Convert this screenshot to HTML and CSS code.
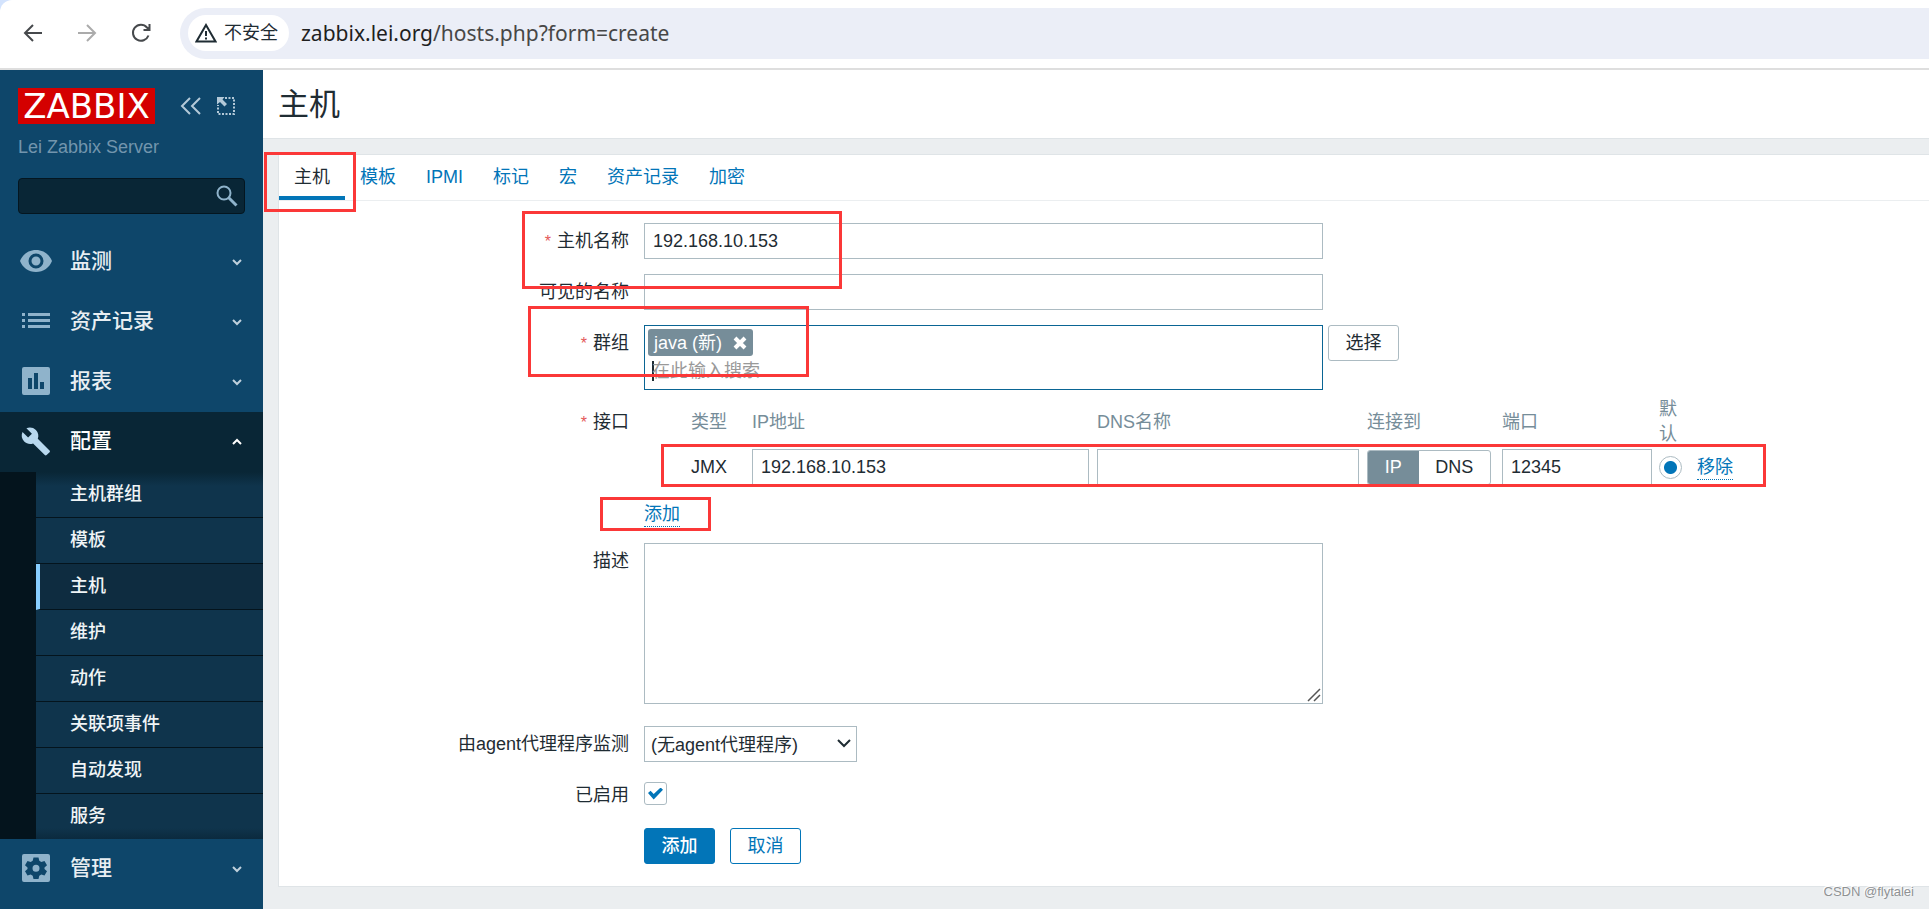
FILE: index.html
```html
<!DOCTYPE html>
<html lang="zh-CN">
<head>
<meta charset="utf-8">
<title>主机</title>
<link rel="stylesheet" href="styles.css">
</head>
<body>
<div class="chrome">
  <header class="toolbar">
    <button class="nav-btn" type="button" aria-label="后退"><svg width="24" height="24" viewBox="0 0 24 24"><path d="M21 12H4M12 4l-8 8 8 8"/></svg></button>
    <button class="nav-btn nav-off" type="button" aria-label="前进"><svg width="24" height="24" viewBox="0 0 24 24"><path d="M3 12h17M12 4l8 8-8 8"/></svg></button>
    <button class="nav-btn" type="button" aria-label="刷新"><svg width="24" height="24" viewBox="0 0 24 24"><path d="M19.500 14.500A8 8 0 1 1 18 6.500l2 2M20.500 3v6h-6"/></svg></button>
    <div class="omnibox">
      <span class="secure"><svg width="22" height="20" viewBox="0 0 22 20"><path d="M11 2L20.500 18.500H1.500z"/><path d="M11 8v5M11 14.500v2"/></svg>不安全</span>
      <span class="url">zabbix.lei.org<span class="path">/hosts.php?form=create</span></span>
    </div>
  </header>
</div>
<div class="app">
  <aside class="sidebar">
    <div class="brand">
      <a class="logo" href="#">ZABBIX</a>
      <button class="ghost" type="button" aria-label="收起"><svg width="22" height="20" viewBox="0 0 22 20"><path d="M11 2L3 10l8 8M21 2l-8 8 8 8"/></svg></button>
      <button class="ghost" type="button" aria-label="隐藏"><svg width="20" height="20" viewBox="0 0 20 20"><path d="M9 2h9v16H2V9" stroke-dasharray="2 1.500"/><path d="M1 1h7.500L6.500 3.500l4.500 4.500-2.500 2.500L4 6 1 8.500z" class="solid"/></svg></button>
    </div>
    <div class="server">Lei Zabbix Server</div>
    <form class="search">
      <input type="text" aria-label="搜索">
      <button type="button" aria-label="搜索"><svg width="22" height="22" viewBox="0 0 22 22"><circle cx="8" cy="8" r="6.500"/><path d="M12.500 12.500l8 8" stroke-width="3"/></svg></button>
    </form>
    <nav class="menu">
      <a class="item" href="#"><svg class="ico" width="32" height="32" viewBox="0 0 32 32"><path fill-rule="evenodd" d="M16 5C8.500 5 2.500 9.500 0 16c2.500 6.500 8.500 11 16 11s13.500-4.500 16-11C29.500 9.500 23.500 5 16 5zm0 18.500a7.500 7.500 0 1 1 0-15 7.500 7.500 0 0 1 0 15zm0-3a4.500 4.500 0 1 0 0-9 4.500 4.500 0 0 0 0 9z"/></svg><span>监测</span><svg class="chev" width="10" height="8" viewBox="0 0 10 8"><path d="M1 2l4 4 4-4"/></svg></a>
      <a class="item" href="#"><svg class="ico" width="32" height="32" viewBox="0 0 32 32"><path d="M2 8h3v3H2zM8 8h22v3H8zM2 14h3v3H2zM8 14h22v3H8zM2 20h3v3H2zM8 20h22v3H8z"/></svg><span>资产记录</span><svg class="chev" width="10" height="8" viewBox="0 0 10 8"><path d="M1 2l4 4 4-4"/></svg></a>
      <a class="item" href="#"><svg class="ico" width="32" height="32" viewBox="0 0 32 32"><path fill-rule="evenodd" d="M4 2h24a2 2 0 0 1 2 2v24a2 2 0 0 1-2 2H4a2 2 0 0 1-2-2V4a2 2 0 0 1 2-2zm4 11v11h4V13zm6-5v16h4V8zm6 9v7h4v-7z"/></svg><span>报表</span><svg class="chev" width="10" height="8" viewBox="0 0 10 8"><path d="M1 2l4 4 4-4"/></svg></a>
      <a class="item item-open" href="#"><svg class="ico" width="32" height="32" viewBox="0 0 32 32"><path d="M29.500 25.500L17.800 13.800c1.200-3 .5-6.500-1.900-8.900C13.300 2.300 9.500 1.800 6.400 3.200l5.500 5.500-3.800 3.800L2.500 7C1 10.100 1.600 13.900 4.200 16.500c2.400 2.400 5.900 3 8.900 1.900l11.700 11.700c.5.500 1.300.5 1.800 0l3-2.900c.5-.5.500-1.300-.1-1.700z"/></svg><span>配置</span><svg class="chev" width="10" height="8" viewBox="0 0 10 8"><path d="M1 6l4-4 4 4"/></svg></a>
      <div class="submenu">
        <a href="#">主机群组</a>
        <a href="#">模板</a>
        <a href="#" class="current">主机</a>
        <a href="#">维护</a>
        <a href="#">动作</a>
        <a href="#">关联项事件</a>
        <a href="#">自动发现</a>
        <a href="#">服务</a>
      </div>
      <a class="item" href="#"><svg class="ico" width="32" height="32" viewBox="0 0 32 32"><path fill-rule="evenodd" d="M4 2h24a2 2 0 0 1 2 2v24a2 2 0 0 1-2 2H4a2 2 0 0 1-2-2V4a2 2 0 0 1 2-2zm9.500 3.500l-.8 3.300-2 1.200-3.200-1L5 13.300l2.500 2.200v1.600L5 19.300l2.500 4.300 3.200-1 2 1.200.8 3.300h5l.8-3.300 2-1.200 3.200 1 2.500-4.300-2.500-2.200v-1.600l2.500-2.200L24.500 9l-3.200 1-2-1.200-.8-3.300zm2.500 7.300a3.500 3.500 0 1 1 0 7 3.500 3.500 0 0 1 0-7z"/></svg><span>管理</span><svg class="chev" width="10" height="8" viewBox="0 0 10 8"><path d="M1 2l4 4 4-4"/></svg></a>
    </nav>
  </aside>
  <main class="main">
    <header class="title"><h1>主机</h1></header>
    <section class="panel">
      <nav class="tabs">
        <a href="#" class="active">主机</a>
        <a href="#">模板</a>
        <a href="#">IPMI</a>
        <a href="#">标记</a>
        <a href="#">宏</a>
        <a href="#">资产记录</a>
        <a href="#">加密</a>
      </nav>
      <form class="form">
        <div class="row">
          <label class="label required" for="host">主机名称</label>
          <input class="box wide" id="host" type="text" value="192.168.10.153">
        </div>
        <div class="row">
          <label class="label" for="visible">可见的名称</label>
          <input class="box wide" id="visible" type="text">
        </div>
        <div class="row row-tight">
          <label class="label required" for="groups">群组</label>
          <div class="multi wide">
            <span class="tag">java (新)<button type="button" aria-label="移除 java"><svg width="14" height="14" viewBox="0 0 14 14"><path d="M2 2l10 10M12 2L2 12"/></svg></button></span>
            <span class="entry"><i class="caret"></i><input id="groups" type="text" placeholder="在此输入搜索"></span>
          </div>
          <button class="btn btn-pick" type="button">选择</button>
        </div>
        <div class="row">
          <span class="label label-interfaces required">接口</span>
          <div>
            <table class="interfaces">
              <colgroup><col class="c-space"><col class="c-type"><col class="c-ip"><col class="c-dns"><col class="c-conn"><col class="c-port"><col class="c-def"><col class="c-act"></colgroup>
              <thead><tr><th></th><th>类型</th><th>IP地址</th><th>DNS名称</th><th>连接到</th><th>端口</th><th><span class="narrow">默认</span></th><th></th></tr></thead>
              <tbody><tr>
                <td></td>
                <td>JMX</td>
                <td><input class="box in-ip" type="text" value="192.168.10.153" aria-label="IP地址"></td>
                <td><input class="box in-dns" type="text" aria-label="DNS名称"></td>
                <td><div class="toggle"><input type="radio" name="conn" id="c-ip" checked><label for="c-ip">IP</label><input type="radio" name="conn" id="c-dns"><label for="c-dns">DNS</label></div></td>
                <td><input class="box in-port" type="text" value="12345" aria-label="端口"></td>
                <td><input class="radio" type="radio" name="default" checked aria-label="默认"></td>
                <td><a class="dotted" href="#">移除</a></td>
              </tr></tbody>
            </table>
            <div class="add"><a class="dotted" href="#">添加</a></div>
          </div>
        </div>
        <div class="row">
          <label class="label" for="desc">描述</label>
          <textarea class="desc wide" id="desc"></textarea>
        </div>
        <div class="row">
          <label class="label" for="proxy">由agent代理程序监测</label>
          <div class="select">
            <select id="proxy"><option>(无agent代理程序)</option></select>
            <svg width="16" height="12" viewBox="0 0 16 12"><path d="M2 2l6 6 6-6"/></svg>
          </div>
        </div>
        <div class="row row-center">
          <label class="label" for="enabled">已启用</label>
          <input class="check" id="enabled" type="checkbox" checked>
        </div>
        <div class="row actions">
          <button class="btn btn-primary" type="button">添加</button>
          <button class="btn btn-line" type="button">取消</button>
        </div>
      </form>
    </section>
  </main>
</div>
<div class="mark mark-tab"></div>
<div class="mark mark-name"></div>
<div class="mark mark-group"></div>
<div class="mark mark-interface"></div>
<div class="mark mark-add"></div>
<div class="watermark">CSDN @flytalei</div>
</body>
</html>
```

FILE: styles.css
```css
* { box-sizing: border-box; }

body {
  margin: 0;
  min-height: 100vh;
  display: flex;
  flex-direction: column;
  position: relative;
  font: 18px/26px "Liberation Sans", "Noto Sans CJK SC", sans-serif;
  color: #1f2c33;
  background: #ebeef0;
}

a { color: #0275b8; text-decoration: none; }
button, input, select, textarea { font: inherit; color: inherit; margin: 0; }
button { cursor: pointer; }
svg { display: block; fill: none; stroke: currentColor; flex: none; }

/* Browser toolbar */
.chrome { background: #d3e3fd; }
.toolbar {
  display: flex;
  align-items: center;
  height: 70px;
  padding: 0 0 2px 21px;
  background: #fff;
  border-bottom: 2px solid #dedede;
  border-top-left-radius: 12px;
}
.nav-btn { width: 24px; margin-right: 30px; padding: 0; border: 0; background: none; color: #46494c; }
.nav-btn svg { stroke-width: 2; }
.nav-off { color: #ababab; }
.omnibox {
  flex: 1;
  display: flex;
  align-items: center;
  height: 51px;
  margin-left: -3px;
  padding-left: 8px;
  background: #ebeef7;
  border-radius: 26px 0 0 26px;
}
.secure {
  display: flex;
  align-items: center;
  gap: 7px;
  height: 36px;
  width: 101px;
  padding-left: 7px;
  border-radius: 18px;
  background: #fff;
  white-space: nowrap;
}
.secure svg { stroke-width: 2; }
.url { margin-left: 12px; font: 21px/28px "Noto Sans", sans-serif; color: #1f1f1f; }
.path { color: #474747; }

.app { flex: 1; display: flex; }

/* Sidebar */
.sidebar { width: 263px; flex: none; background: #0e466a; }
.brand { display: flex; align-items: center; height: 36px; margin: 18px 18px 0; }
.logo {
  flex: none;
  width: 137px;
  height: 36px;
  margin-right: 24px;
  background: #d40000;
  color: #fff;
  font: 34px/36px "DejaVu Sans", sans-serif;
  text-align: center;
}
.ghost { flex: none; padding: 0; margin-right: 15px; border: 0; background: none; color: #b3c9d8; }
.ghost:last-child { margin-right: 0; }
.ghost svg { stroke-width: 2; }
.ghost .solid { fill: currentColor; stroke: none; }
.server { margin: 10px 18px 0; color: #7295ad; }
.search {
  display: flex;
  align-items: center;
  height: 36px;
  margin: 18px 18px 18px;
  background: #092636;
  border: 1px solid #041620;
  border-radius: 4px;
}
.search input { flex: 1; min-width: 0; height: 34px; border: 0; background: none; color: #fff; outline: 0; }
.search button { padding: 0 6px; border: 0; background: none; color: #8fb3cb; }
.search svg { stroke-width: 2; }
.item {
  display: flex;
  align-items: center;
  height: 60px;
  padding: 0 20px 2px;
  color: #e8eef2;
  font-size: 21px;
  font-weight: 500;
}
.item span { flex: 1; margin-left: 18px; }
.ico { fill: #8fb3cb; stroke: none; }
.chev { margin: 2px 1px 0 0; stroke-width: 2; color: #bfd0dc; }
.item-open { background: #092636; color: #fff; }
.item-open .ico { fill: #b8d8ee; }
.item-open .chev { color: #fff; }
.submenu { padding-left: 36px; background: #04141d; }
.submenu a {
  display: block;
  height: 46px;
  padding-left: 34px;
  line-height: 44px;
  background: #0f344c;
  border-bottom: 1px solid #04141d;
  color: #f0f4f6;
  font-weight: 500;
}
.submenu a:first-child { background: linear-gradient(#092636, #0f344c 14px); }
.submenu a:last-child { height: 45px; border-bottom: 0; background: linear-gradient(#0f344c 34px, #0b2a3e); }
.submenu .current { background: #0e2c40; border-left: 4px solid #87ceff; padding-left: 30px; }

/* Page */
.main { flex: 1; min-width: 0; }
.title { height: 69px; padding-left: 15px; background: #fff; border-bottom: 1px solid #dfe4e7; }
.title h1 { margin: 0; font-size: 31px; line-height: 70px; font-weight: 400; }
.panel {
  margin: 15px 0 22px 15px;
  background: #fff;
  border: 1px solid #dfe4e7;
  border-right: 0;
}
.tabs { display: flex; border-bottom: 1px solid #ebeef0; }
.tabs a { height: 45px; padding: 0 15px; line-height: 44px; border-bottom: 4px solid transparent; }
.tabs .active { color: #1f2c33; border-color: #0275b8; }

/* Form */
.form { padding: 22px 0 22px; }
.row { display: flex; align-items: flex-start; margin-bottom: 15px; }
.row-tight { margin-bottom: 7px; }
.row-center { align-items: center; }
.label { width: 350px; flex: none; margin-right: 15px; line-height: 36px; text-align: right; }
.label-interfaces { padding-top: 7px; }
.required::before { content: "*"; margin-right: 6px; color: #e45959; font-size: 16px; line-height: 16px; }
.box {
  height: 36px;
  padding: 0 8px;
  border: 1px solid #acbbc2;
  border-radius: 0;
  background: #fff;
  outline: 0;
}
.wide { width: 679px; }
.multi { padding: 3px; height: 65px; border: 1px solid #0a6594; }
.tag {
  display: flex;
  align-items: center;
  width: max-content;
  height: 27px;
  padding: 0 6px;
  border-radius: 3px;
  background: #768d99;
  color: #fff;
}
.tag button { margin-left: 11px; padding: 0; border: 0; background: none; color: #fff; }
.tag svg { stroke-width: 4; }
.entry { display: flex; align-items: center; padding-left: 4px; height: 30px; }
.caret { width: 2px; height: 20px; background: #1f2c33; margin-right: -2px; }
.entry input { width: 300px; padding: 0; border: 0; outline: 0; background: none; }
.entry input::placeholder { color: #999; }
.btn { height: 36px; width: 71px; padding: 0; border: 1px solid #0275b8; border-radius: 3px; background: #fff; line-height: 34px; }
.btn-pick { margin-left: 5px; border-color: #acbbc2; }
.btn-primary { background: #0275b8; color: #fff; font-weight: 500; }
.btn-line { color: #0275b8; }

.interfaces { border-collapse: collapse; table-layout: fixed; width: 1090px; }
.interfaces th { height: 50px; padding: 0; font-weight: 400; text-align: left; line-height: 25px; color: #768d99; }
.interfaces td { height: 40px; padding: 0; }
.c-space { width: 47px; }
.c-type { width: 61px; }
.c-ip { width: 345px; }
.c-dns { width: 270px; }
.c-conn { width: 135px; }
.c-port { width: 157px; }
.c-def { width: 38px; }
.narrow { display: block; width: 20px; }
.box, .toggle, .radio { display: block; }
.in-ip { width: 337px; }
.in-dns { width: 262px; }
.in-port { width: 150px; }
.toggle { display: flex; width: 124px; height: 35px; border: 1px solid #acbbc2; border-radius: 3px; overflow: hidden; position: relative; }
.toggle input { position: absolute; opacity: 0; }
.toggle label { flex: 1 1 auto; padding: 0 4px; line-height: 33px; text-align: center; }
.toggle input:checked + label { background: #768d99; color: #fff; }
.radio {
  appearance: none;
  width: 23px;
  height: 23px;
  border: 1px solid #acbbc2;
  border-radius: 50%;
  background: radial-gradient(circle, #0275b8 6px, #fff 7px);
}
.dotted { display: inline-block; line-height: 24px; border-bottom: 1px dotted #0275b8; }
.add { height: 41px; padding-top: 14px; }
.desc { display: block; height: 161px; margin-bottom: 7px; border: 1px solid #acbbc2; border-radius: 0; outline: 0; }
.desc::-webkit-resizer {
  background: url("data:image/svg+xml,%3Csvg xmlns='http://www.w3.org/2000/svg' width='15' height='15'%3E%3Cpath d='M1 13L13 1M7 13l6-6' stroke='%23555' stroke-width='1.500' fill='none'/%3E%3C/svg%3E") no-repeat;
}
.select { display: grid; align-items: center; width: 213px; }
.select select, .select svg { grid-area: 1 / 1; }
.select select {
  appearance: none;
  width: 100%;
  height: 36px;
  padding: 2px 30px 0 6px;
  border: 1px solid #acbbc2;
  border-radius: 0;
  background: #fff;
}
.select svg { justify-self: end; margin-right: 5px; stroke-width: 2; pointer-events: none; z-index: 1; }
.check {
  appearance: none;
  display: grid;
  place-items: center;
  width: 23px;
  height: 23px;
  margin: 5px 0 8px;
  border: 1px solid #acbbc2;
  border-radius: 3px;
  background: #fff;
}
.check:checked::before {
  content: "";
  width: 15px;
  height: 12px;
  background: #0275b8;
  clip-path: polygon(0 45%, 17% 27%, 38% 54%, 84% 0, 100% 18%, 38% 100%);
}
.actions { gap: 15px; margin: 0; padding-left: 365px; }

/* Annotations drawn over the page */
.mark { position: absolute; border: 3px solid #fb3838; pointer-events: none; }
.mark-tab { left: 264px; top: 152px; width: 92px; height: 60px; }
.mark-name { left: 522px; top: 211px; width: 320px; height: 78px; }
.mark-group { left: 528px; top: 306px; width: 281px; height: 71px; }
.mark-interface { left: 661px; top: 444px; width: 1105px; height: 43px; }
.mark-add { left: 600px; top: 497px; width: 111px; height: 34px; }
.watermark {
  position: absolute;
  right: 15px;
  bottom: 8px;
  font-size: 13px;
  line-height: 18px;
  color: #8f9294;
  text-shadow: -1px -1px 0 #fff;
}
```
